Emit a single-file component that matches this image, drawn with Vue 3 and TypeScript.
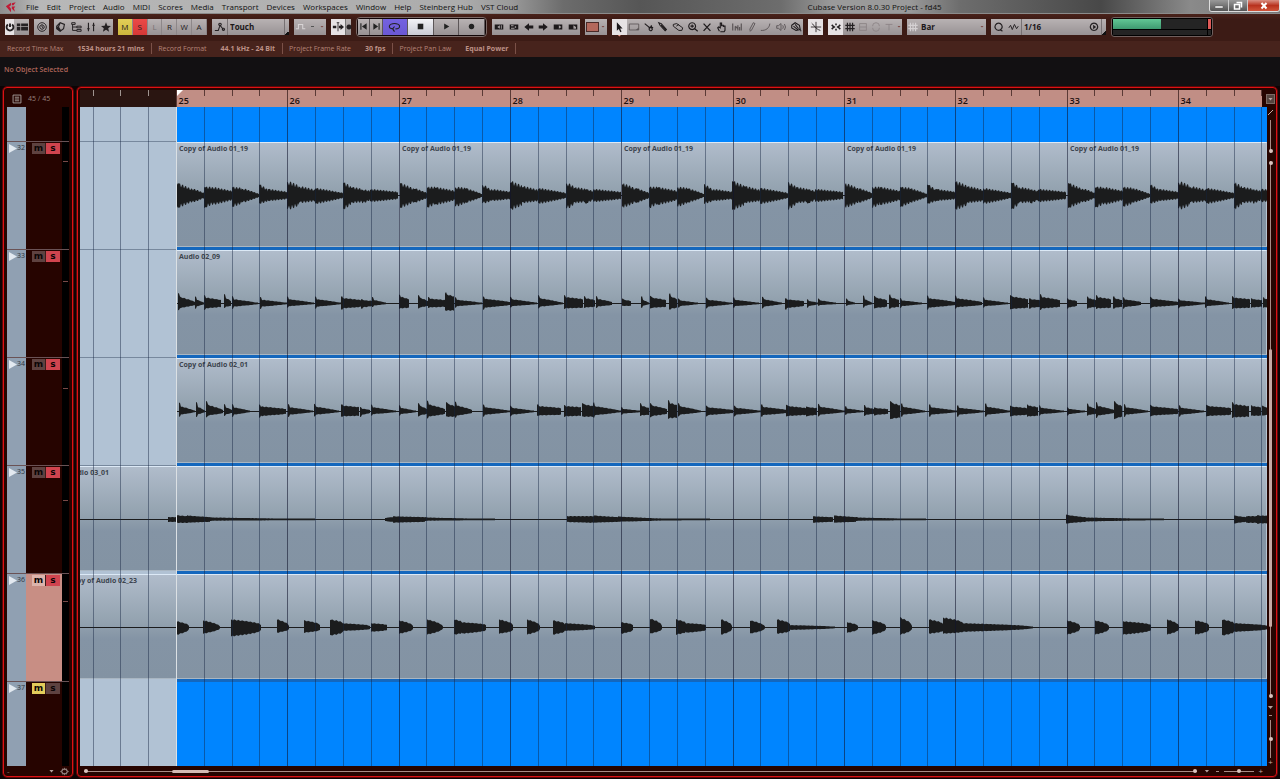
<script setup lang="ts">
import { computed, h, onBeforeUnmount, onMounted, ref } from 'vue'

type Glyph = { s?: string; f?: string; w?: number }
type Hit = [x: number, up: number, down: number, length: number, tail?: number]
type Clip = { name: string; start: number }
type Lane = { id: number; clips: Clip[]; hits: Hit[]; body: number; bend: number; comb?: boolean; mark: number }

const glyphs: Record<string, Glyph> = {
  power: { s: 'M4.6 4A4 4 0 1 0 9.4 4M7 3V7', w: 2.2 },
  layout: { f: 'M1 3h4v3H1zM6 3h8v3H6zM1 7h4v4H1zM6 7h8v4H6z' },
  clock: { s: 'M7 2a5 5 0 1 0 .01 0M7 4.4a2.6 2.6 0 1 0 .01 0M7 5v2l1.5 1', w: 1.1 },
  cube: { s: 'M2 6l4-4 5 2-1 5-4 3-4-3zM6 2L4 7l3 5', w: 1.3, f: 'M2 6l2 1 3 5-1 0-4-3z' },
  tree: { s: 'M2 2h4v2H2zM3 4v7h5M3 7h5M8 6h5v2H8zM8 10h5v2H8z', w: 1.1 },
  mixer: { s: 'M4 2v10M10 2v10M2.5 9h3M8.5 5h3M4 8v2M10 4v2', w: 1.3 },
  star: { f: 'M7 1.5l1.6 3.9 4.2.3-3.2 2.7 1 4.1L7 10.2l-3.6 2.3 1-4.1L1.2 5.7l4.2-.3z' },
  node: { s: 'M1 11h4l2-6 4 5M7 2.5a1.5 1.5 0 1 0 .01 0M11 8.5a1.3 1.3 0 1 0 .01 0', w: 1.2 },
  pulse: { s: 'M1 9h3V4h5v5h3', w: 1.2 },
  autoscroll: { s: 'M7 2v10M5.5 2h3', w: 1, f: 'M1 5.5h4v3H1zM8 5.5h2V3.6L14 7l-4 3.4V8.5H8z' },
  dot: { f: 'M7 4a3 3 0 1 0 .01 0' },
  prev: { f: 'M3 3h1.4v8H3zM11 3v8L5 7z' },
  next: { f: 'M9.6 3H11v8H9.6zM3 3v8l6-4z' },
  cycle: { s: 'M5.5 9.600C2 9.600 1 8 1.600 6.200 3 3 11 3 12.400 6.200 13 8.500 11 9.600 8 9.600M7 7l-2 2.600L7 12.500', w: 1.2 },
  stop: { f: 'M4 4h6v6H4z' },
  play: { f: 'M4.500 3.800v6.400L10 7z' },
  record: { f: 'M7 4a3 3 0 1 0 .01 0' },
  boxLeft: { f: 'M2 4h10v6H2zM8 5v4L5 7zM9.200 5h1v4h-1z' },
  boxRight: { f: 'M2 4h10v6H2zM3.500 5h3v1h-3zM3.500 8h4v1h-4zM8 5.500l2 1.500-2 1.500z' },
  left: { f: 'M1.500 7L7 2.500v2.700h5v3.600H7v2.700z' },
  right: { f: 'M12.500 7L7 2.500v2.700H2v3.600h5v2.700z' },
  headLeft: { f: 'M2 4h10v6H2zM8 5v4l3-2z' },
  headRight: { f: 'M2 4h10v6H2zM7.500 5v4h3V7z' },
  arrow: { f: 'M4.500 1.500v10l2.300-2.200 1.700 3.700 1.500-.8-1.700-3.500h2.900z' },
  range: { s: 'M1.500 3.500h11v7h-11z', f: 'M9 10.500h3.500V7.500z', w: 1 },
  scissors: { s: 'M2 3l6 5M6.500 8l4-1.500M8 8a1.700 1.700 0 1 0 2 3 1.700 1.700 0 0 0-2-3M10.500 5.500a1.200 1.200 0 1 0 1 1.500', w: 1.3 },
  glue: { s: 'M2 2l3 1 6 7-1.500 1.500L3.500 5z', w: 1.2, f: 'M5 4l6 6.500L9.500 11 4 5z' },
  eraser: { s: 'M1.500 4l4-1 7 5-1 3H8L1.500 6zM5 6l3-2', w: 1.1 },
  zoom: { s: 'M6 2a4 4 0 1 0 .01 0M4 6h4M6 4v4M9 9l3.500 3', w: 1.3 },
  mute: { s: 'M3 3l8 8.500M11 3l-8 8.500', w: 1.5 },
  hand: { s: 'M4 12L2 8l1-1 2 1V4M5 7V2.500h1.500V6M6.500 5h2v2M8.500 6h2v5l-1 1.500H5', w: 1.3 },
  warp: { s: 'M2 3v8M5 6v5M8 5v6M12 3v8M10 7v4M5 6l3 3', w: 1.4 },
  pencil: { s: 'M5 12l-.500-2.500L8.500 2l2 1-4 7.500z', w: 1.1 },
  curve: { s: 'M1 11C7 11.500 11 8 11.500 3', w: 1.1 },
  speaker: { s: 'M2 5.500h2L7 3v8L4 8.500H2zM9 5q1.500 2 0 4M11 3.500q2.500 3.500 0 7', w: 1.1 },
  bucket: { s: 'M2 5l4-3 5 3 1 5-5 1-5-3zM4 6l5 4M6 4l4 5M11 9l2 3', w: 1.2 },
  crosshair: { s: 'M7 1v12M1 7h12M2 2.500C5 5 6 9 12 11', w: 1 },
  snap: { s: 'M2 4.500L4.500 7 2 9.500M5 7h1M12 4.500L9.500 7 12 9.500M9 7H8M7 3v2M7 9v2', w: 1.8 },
  grid: { s: 'M4 2v10M7 2v10M10 2v10M1.500 5h11M1.500 9h11', w: 1.4 },
  box: { s: 'M3 3h8v8H3zM3 7h8', w: 1 },
  loop: { s: 'M3 6a4 4 0 0 1 8 0M11 8a4 4 0 0 1-8 0', w: 1 },
  tee: { s: 'M3 4h8M7 4v7', w: 1 },
  quant: { s: 'M6.500 2.500a4.200 4.200 0 1 0 .01 0M8 9.500l3 2.500', w: 1.4 },
  wave: { s: 'M1 8l2-3 2 5 2.500-6L10 9l2-3', w: 1.1 },
  apply: { s: 'M7 2.500a4.300 4.300 0 1 0 .01 0', w: 1.4, f: 'M6 4.500L9.500 7 6 9.500z' },
  logo: { f: 'M1 6l6-4 0 3-2 1.500L7 9v4zM8 2.500l4.500-1L10 5l-2 0zM8 6.500l4 0-1.500 2 1 4L8 9z' },
  list: { s: 'M1.500 1.500h11v11h-11zM4 4.500h6M4 7h6M4 9.500h6', w: 1.3 },
  gear: { s: 'M7 2.500l1 1.500 2-.5.5 2 2 1.500-2 1.500-.5 2-2-.5-1 1.500-1-1.500-2 .5-.5-2-2-1.500 2-1.500.5-2 2 .5z', w: 2 },
}

const Icon = (props: { name: string }) => {
  const g = glyphs[props.name]
  return h('svg', { viewBox: '0 0 14 14', 'aria-hidden': 'true' }, [
    g.s ? h('path', { d: g.s, fill: 'none', stroke: 'currentColor', 'stroke-width': g.w ?? 1 }) : null,
    g.f ? h('path', { d: g.f, fill: 'currentColor', 'fill-rule': 'evenodd' }) : null,
  ])
}
Icon.props = ['name']

const menus = ['File', 'Edit', 'Project', 'Audio', 'MIDI', 'Scores', 'Media', 'Transport', 'Devices', 'Workspaces', 'Window', 'Help', 'Steinberg Hub', 'VST Cloud']
const windows = ['cube', 'tree', 'mixer', 'star']
const states = ['M', 'S', 'L', 'R', 'W', 'A']
const transport = ['prev', 'next', 'cycle', 'stop', 'play', 'record']
const locators = ['boxLeft', 'boxRight', 'left', 'right', 'headLeft', 'headRight']
const tools = ['arrow', 'range', 'scissors', 'glue', 'eraser', 'zoom', 'mute', 'hand', 'warp', 'pencil', 'curve', 'speaker', 'bucket']
const info = [
  ['Record Time Max', '1534 hours 21 mins'],
  ['Record Format', '44.1 kHz - 24 Bit'],
  ['Project Frame Rate', '30 fps'],
  ['Project Pan Law', 'Equal Power'],
]
const automation = ref('Touch')
const gridType = ref('Bar')
const quantize = ref('1/16')

// Timeline geometry: project x of the left view edge, of bar 25, and the width of a beat
const viewX = 80
const barX = 177
const beat = 27.83
const viewWidth = ref(window.innerWidth - 93)
const measure = () => { viewWidth.value = window.innerWidth - 93 }
onMounted(() => window.addEventListener('resize', measure))
onBeforeUnmount(() => window.removeEventListener('resize', measure))

const lines = computed(() => {
  const count = Math.ceil((viewWidth.value - (barX - viewX)) / beat) + 3
  return Array.from({ length: count }, (_, i) => {
    const k = i - 3
    return { k, x: Math.round(barX - viewX + k * beat) - 0.5, bar: k >= 0 && k % 4 === 0 }
  })
})
const bars = computed(() =>
  lines.value.filter((l) => l.bar && l.x + 20 < viewWidth.value).map((l) => ({ x: l.x, n: 25 + l.k / 4 })),
)

const loopHits: Hit[] = [[177, 12, 12, 14, 6], [191, 7, 7, 13, 2], [204, 8, 12, 8, 8], [212, 8, 9, 20, 4], [232, 8, 11, 10, 7], [242, 7, 7, 17, 1], [259, 11, 8, 9, 5], [268, 6, 5, 20, 3], [287, 14, 14, 12, 9], [299, 9, 7, 16, 5], [315, 7, 8, 28, 2], [343, 13, 14, 8, 8], [351, 8, 7, 11, 6], [362, 6, 8, 8, 4], [370, 6, 6, 28, 3]]
const copies = [0, 1, 2, 3, 4]

const lanes: Lane[] = [
  {
    id: 32, mark: 19, comb: true, body: 1, bend: 0.9,
    clips: copies.map((i) => ({ name: 'Copy of Audio 01_19', start: Math.round(barX + i * beat * 8) })),
    hits: copies.flatMap((i) => loopHits.map(([x, u, d, l, t]): Hit => [x + Math.round(i * beat * 8), u, d, l, t])),
  },
  {
    id: 33, mark: 31, body: 0.6, bend: 0.8, clips: [{ name: 'Audio 02_09', start: barX }],
    hits: [[178, 11, 7, 17, 1], [195, 7, 5, 9], [204, 8, 6, 17, 3], [224, 9, 4, 7, 2], [232, 7, 5, 26], [260, 6, 5, 27], [287, 7, 4, 27], [315, 7, 5, 26], [341, 7, 6, 20, 3], [361, 4, 5, 12, 2], [372, 6, 3, 14], [399, 9, 5, 10, 4], [418, 9, 5, 10, 2], [428, 6, 4, 17, 3], [445, 11, 7, 9, 7], [455, 6, 4, 27], [483, 7, 6, 27, 1], [510, 7, 4, 27], [538, 9, 5, 25], [564, 8, 5, 19, 4], [584, 7, 4, 11, 3], [596, 7, 4, 16, 1], [622, 5, 2, 9, 2], [641, 7, 4, 8], [650, 8, 5, 16, 3], [669, 10, 6, 8, 4], [678, 5, 4, 20], [706, 6, 5, 26], [733, 6, 4, 26], [762, 7, 5, 20], [785, 5, 6, 19, 2], [807, 4, 4, 12], [818, 5, 2, 18], [846, 5, 2, 9], [863, 8, 4, 9], [874, 8, 5, 13, 3], [889, 9, 5, 10, 3], [900, 5, 4, 22], [927, 8, 6, 28, 1], [955, 8, 5, 27, 1], [983, 6, 4, 25], [1010, 9, 6, 18, 4], [1029, 5, 5, 11, 3], [1040, 9, 6, 20, 3], [1067, 5, 5, 10, 2], [1087, 7, 5, 9, 3], [1096, 8, 5, 15, 4], [1113, 7, 5, 9, 3], [1123, 6, 5, 18, 1], [1150, 7, 5, 28, 1], [1178, 5, 5, 27], [1205, 7, 4, 24], [1232, 7, 5, 18, 4], [1251, 5, 4, 11, 3], [1263, 6, 4, 8, 3]],
  },
  {
    id: 34, mark: 30, body: 0.6, bend: 0.8, clips: [{ name: 'Copy of Audio 02_01', start: barX }],
    hits: [[179, 9, 5, 16], [196, 9, 5, 9], [206, 11, 6, 17, 1], [224, 7, 4, 8, 1], [232, 7, 5, 18], [259, 7, 6, 27, 2], [288, 7, 5, 25], [314, 8, 5, 25], [341, 7, 5, 18, 4], [360, 4, 5, 10, 1], [371, 7, 4, 25], [399, 6, 4, 17], [418, 9, 5, 9, 2], [427, 11, 7, 18, 2], [446, 10, 5, 9, 5], [455, 10, 6, 17, 1], [483, 7, 5, 27], [510, 6, 5, 24], [537, 7, 4, 24, 3], [564, 6, 5, 17, 4], [582, 9, 5, 11, 5], [593, 9, 6, 28], [621, 4, 3, 20], [640, 8, 4, 9, 3], [650, 9, 6, 17, 2], [668, 11, 7, 9, 6], [678, 9, 5, 23], [706, 6, 5, 27, 1], [734, 6, 5, 27], [761, 7, 5, 26, 1], [786, 7, 5, 20, 3], [806, 5, 5, 11, 3], [818, 8, 5, 27], [845, 5, 3, 18], [864, 6, 4, 10, 2], [874, 4, 4, 14, 2], [890, 11, 8, 10, 6], [901, 8, 5, 24], [929, 7, 5, 28], [957, 6, 5, 27], [985, 8, 5, 25], [1010, 6, 5, 17, 3], [1027, 7, 5, 11, 4], [1039, 6, 4, 25], [1067, 4, 4, 18], [1087, 8, 4, 9, 2], [1096, 9, 6, 18, 1], [1114, 11, 8, 8, 5], [1124, 7, 5, 24], [1150, 7, 5, 28, 2], [1179, 6, 5, 25], [1206, 7, 5, 25, 3], [1232, 9, 6, 17, 5], [1251, 6, 4, 10, 4], [1262, 6, 4, 9, 3]],
  },
  {
    id: 35, mark: 34, body: 0.8, bend: 1, clips: [{ name: 'Audio 03_01', start: 66 }],
    hits: [[168, 2, 2, 9, 2], [177, 4, 3, 10, 3], [187, 4, 3, 23, 2], [210, 2, 1, 105], [385, 1, 1, 8, 2], [393, 3, 3, 32, 2], [425, 2, 1, 70], [567, 3, 2, 27, 3], [594, 4, 3, 24, 2], [618, 3, 2, 32, 1], [650, 1, 1, 60], [813, 3, 3, 20, 2], [834, 4, 3, 22, 2], [856, 2, 1, 70], [1066, 5, 4, 18, 2], [1084, 2, 2, 80], [1234, 4, 4, 12, 2], [1246, 3, 3, 11, 3], [1257, 4, 4, 20, 3]],
  },
  {
    id: 36, mark: 27, body: 1, bend: 0.5, clips: [{ name: 'Copy of Audio 02_23', start: 66 }],
    hits: [[177, 6, 7, 12, 1], [203, 7, 6, 17], [231, 8, 9, 30, 2], [277, 8, 5, 12, 1], [304, 7, 5, 16, 2], [330, 8, 8, 13, 4], [343, 4, 3, 27, 1], [371, 4, 4, 16, 2], [399, 7, 6, 14, 1], [427, 8, 7, 16], [454, 8, 7, 8, 5], [462, 5, 6, 24, 2], [499, 8, 6, 14, 2], [527, 8, 7, 13, 1], [553, 7, 7, 12, 3], [565, 4, 3, 30, 1], [621, 5, 6, 12, 2], [650, 9, 6, 12, 1], [676, 8, 7, 10, 4], [686, 4, 5, 20, 2], [721, 8, 7, 11, 1], [750, 7, 6, 15], [777, 8, 6, 13, 3], [790, 2, 2, 45], [847, 5, 5, 11, 1], [872, 7, 7, 14, 1], [900, 10, 7, 12, 1], [929, 8, 6, 14, 3], [943, 10, 6, 20, 4], [963, 4, 4, 70], [1067, 7, 7, 13, 1], [1095, 7, 7, 14, 1], [1123, 6, 7, 28, 2], [1167, 8, 7, 12, 1], [1195, 7, 7, 14, 2], [1222, 8, 8, 12, 4], [1234, 4, 4, 34, 1]],
  },
]

const mid = 53
function wavePath(lane: Lane): string {
  return lane.hits
    .map(([x, up, down, length, tail = 0]) => {
      const top: string[] = []
      const bottom: string[] = []
      for (let i = 0; i <= length; i++) {
        const fall = i < 2 ? 1 : lane.body * Math.pow(1 - i / length, lane.bend)
        const comb = lane.comb && i > 1 ? [1.08, 0.72, 1][(x + i) % 3] : 1 - ((x * 7 + i * 5) % 4) * 0.05
        const px = x - viewX + i
        top.push(`${px} ${(mid - Math.max(0.5, (tail + (up - tail) * fall) * comb)).toFixed(1)}`)
        bottom.unshift(`${px} ${(mid + 1 + Math.max(0.3, (tail + (down - tail) * fall) * comb)).toFixed(1)}`)
      }
      return `M${top.join('L')}L${bottom.join('L')}Z`
    })
    .join('')
}
const drawn = computed(() => lanes.map((l) => ({ ...l, path: wavePath(l), gutter: Math.max(0, l.clips[0].start - viewX) })))

function clipStyle(lane: Lane, i: number) {
  const clip = lane.clips[i]
  const next = lane.clips[i + 1]
  return {
    marginLeft: clip.start < viewX ? `${clip.start - viewX}px` : undefined,
    flex: next ? `0 0 ${next.start - clip.start}px` : '1 0 0',
  }
}
</script>

<template>
  <div class="app">
    <header class="titlebar">
      <Icon name="logo" class="logo" />
      <nav class="menus"><button v-for="m in menus" :key="m" type="button">{{ m }}</button></nav>
      <h1>Cubase Version 8.0.30 Project - fd45</h1>
      <div class="winctl">
        <button type="button" aria-label="Minimize"><svg viewBox="0 0 18 12"><path d="M5 6h8v2H5z" fill="#fff" stroke="#555" stroke-width=".5" /></svg></button>
        <button type="button" aria-label="Restore"><svg viewBox="0 0 18 12"><path d="M7.500 2.500h5v5M5.500 4.500h5v4.500h-5z" fill="none" stroke="#fff" stroke-width="1.500" /></svg></button>
        <button type="button" aria-label="Close" class="close"><svg viewBox="0 0 18 12"><path d="M6.500 3l5 5.500M11.500 3l-5 5.500" stroke="#fff" stroke-width="2" /></svg></button>
      </div>
    </header>

    <div class="toolbar">
      <div class="group w-setup">
        <button type="button" class="lit narrow" aria-label="Activate project"><Icon name="power" /></button>
        <button type="button" aria-label="Window layout"><Icon name="layout" /></button>
      </div>
      <div class="group w-one"><button type="button" aria-label="Delay compensation"><Icon name="clock" /></button></div>
      <div class="group w-windows"><button v-for="n in windows" :key="n" type="button" :aria-label="n"><Icon :name="n" /></button></div>
      <div class="group w-states"><button v-for="s in states" :key="s" type="button" class="letter" :class="'st-' + s">{{ s }}</button></div>
      <div class="group w-auto">
        <button type="button" class="fixed" aria-label="Automation panel"><Icon name="node" /></button>
        <select v-model="automation" class="split" aria-label="Automation mode"><option>Touch</option></select>
        <span class="corner"></span>
      </div>
      <div class="group w-pulse dim"><button type="button" aria-label="Automation curve"><Icon name="pulse" /></button><span class="dash"></span><span class="caret"></span></div>
      <div class="group w-scroll">
        <button type="button" class="lit" aria-label="Autoscroll"><Icon name="autoscroll" /></button>
        <button type="button" class="tiny" aria-label="Autoscroll options"><Icon name="dot" /></button>
      </div>
      <div class="transport"><button v-for="t in transport" :key="t" type="button" :class="'t-' + t" :aria-label="t"><Icon :name="t" /></button></div>
      <div class="group w-loc"><button v-for="l in locators" :key="l" type="button" :aria-label="l"><Icon :name="l" /></button></div>
      <div class="group w-color"><button type="button" aria-label="Colour"><span class="swatch"></span></button><span class="caret"></span></div>
      <div class="group w-tools"><button v-for="t in tools" :key="t" type="button" :class="['tool-' + t, { lit: t === 'arrow' }]" :aria-label="t"><Icon :name="t" /></button></div>
      <div class="group w-one"><button type="button" class="lit" aria-label="Snap to zero crossing"><Icon name="crosshair" /></button></div>
      <div class="group w-snap">
        <button type="button" class="lit fixed" aria-label="Snap"><Icon name="snap" /></button>
        <button type="button" aria-label="Snap type grid"><Icon name="grid" /></button>
        <button type="button" class="faint" aria-label="Events"><Icon name="box" /></button>
        <button type="button" class="faint" aria-label="Shuffle"><Icon name="loop" /></button>
        <button type="button" class="faint" aria-label="Cursor"><Icon name="tee" /></button>
        <span class="caret"></span>
      </div>
      <div class="group w-grid">
        <Icon name="grid" class="pale" />
        <select v-model="gridType" aria-label="Grid type"><option>Bar</option></select>
        <span class="caret"></span>
      </div>
      <div class="group w-quant">
        <button type="button" class="fixed" aria-label="Quantize"><Icon name="quant" /></button>
        <button type="button" class="fixed" aria-label="Iterative quantize"><Icon name="wave" /></button>
        <select v-model="quantize" class="split" aria-label="Quantize preset"><option>1/16</option></select>
        <button type="button" class="fixed" aria-label="Apply quantize"><Icon name="apply" /></button>
        <span class="corner"></span>
      </div>
      <div class="perf"><div class="load"><i></i><b></b></div><div class="disk"><b></b></div></div>
    </div>

    <dl class="status">
      <div v-for="[k, v] in info" :key="k"><dt>{{ k }}</dt><dd>{{ v }}</dd></div>
    </dl>
    <p class="infoline">No Object Selected</p>

    <main class="work">
      <section class="panel tracks">
        <div class="trackhead"><Icon name="list" /><span>45 / 45</span></div>
        <div class="tracklist">
          <div class="track stub"><div class="chip"></div><div class="body"></div><div class="meter"></div></div>
          <div v-for="l in lanes" :key="l.id" class="track" :class="{ selected: l.id === 36 }">
            <div class="chip"><i class="tri"></i>{{ l.id }}</div>
            <div class="body"><button type="button" class="m">m</button><button type="button" class="s on">s</button></div>
            <div class="meter"><i :style="{ marginTop: l.mark + 'px' }"></i></div>
          </div>
          <div class="track rest">
            <div class="chip"><i class="tri"></i>37</div>
            <div class="body"><button type="button" class="m on">m</button><button type="button" class="s">s</button></div>
            <div class="meter"></div>
          </div>
        </div>
        <div class="trackfoot"><span>-</span><i class="down"></i><Icon name="gear" /></div>
      </section>

      <section class="panel arrange">
        <div class="stage">
          <div class="ruler">
            <svg>
              <line v-for="l in lines" :key="l.k" :x1="l.x" :x2="l.x" y1="0" :y2="l.bar ? 17 : 6" :class="{ pre: l.k < 0 }" />
              <path d="M97 0h6l-6 6z" class="flag" />
              <text v-for="b in bars" :key="b.n" :x="b.x + 2" y="14">{{ b.n }}</text>
            </svg>
          </div>
          <div class="lanes">
            <div class="lane stub"><div class="gutter"></div></div>
            <div v-for="l in drawn" :key="l.id" class="lane event">
              <div v-if="l.gutter" class="gutter"></div>
              <div v-for="(c, i) in l.clips" :key="c.start" class="clip" :style="clipStyle(l, i)">{{ c.name }}</div>
              <svg class="wave"><rect :x="l.gutter" y="53" width="100%" height="1" /><path :d="l.path" /></svg>
            </div>
            <div class="lane rest"><div class="gutter"></div></div>
            <svg class="gridlines">
              <line v-for="l in lines" :key="l.k" :x1="l.x" :x2="l.x" y1="0" y2="100%" :class="{ bar: l.bar, cursor: l.k === 0 }" />
            </svg>
          </div>
        </div>
        <div class="vbar">
          <button type="button" class="vmenu" aria-label="Ruler menu"><i class="down"></i></button>
          <i class="slash"></i>
          <i class="seg end short"></i>
          <i class="gap"></i>
          <i class="seg start lead"></i>
          <i class="thumb"></i>
          <i class="seg end trail"></i>
          <i class="down"></i>
          <i class="minus"></i>
          <i class="seg center"></i>
          <span>+</span>
        </div>
        <div class="hbar">
          <i class="seg start lead"></i>
          <i class="thumb"></i>
          <i class="seg end trail"></i>
          <i class="down"></i>
          <i class="minus"></i>
          <i class="seg center"></i>
          <span>+</span>
        </div>
      </section>
    </main>
  </div>
</template>

<style>
body { margin: 0; background: #0c0405; }
</style>

<style scoped>
.app { min-height: 100vh; display: flex; flex-direction: column; background: #0c0405; font-family: "Open Sans", "Noto Sans", sans-serif; font-size: 8px; line-height: 12px; color: #111; overflow: hidden; }
.app * { box-sizing: border-box; }
button { border: 0; padding: 0; margin: 0; background: none; font: inherit; color: inherit; display: flex; align-items: center; justify-content: center; }
select { appearance: none; border: 0; border-radius: 0; background: none; font: inherit; font-weight: 700; font-size: 8px; color: #1b1719; padding: 0 2px; margin: 0; min-width: 0; flex: 1; height: 100%; }
i { display: block; flex: none; }

.titlebar { height: 14px; display: flex; align-items: center; border-bottom: 1px solid #8b8b8b; background: linear-gradient(90deg, #8e8e8e 0, #b8b8b8 3%, #acacac 36%, #999 40%, #6c6c6c 44%, #565656 50%, #6d6d6d 61%, #9a9a9a 65%, #9a9a9a 71%, #6d6d6d 75%, #484848 86%, #8a8a8a 93%, #777 100%); }
.logo { width: 12px; height: 12px; margin-left: 5px; color: #c01a35; }
.menus { display: flex; gap: 8px; margin-left: 9px; }
h1 { flex: 1; margin: 0; padding-left: 22px; text-align: center; font-size: 8px; font-weight: 400; line-height: 12px; }
.winctl { display: flex; align-self: flex-start; width: 71px; height: 12px; border: 1px solid #ddd; border-top: 0; border-radius: 0 0 3px 3px; overflow: hidden; }
.winctl button { flex: 0 0 18px; background: linear-gradient(#999, #555); border-right: 1px solid #ccc; }
.winctl svg { width: 18px; height: 12px; }
.winctl .close { flex: 1; border: 0; background: linear-gradient(#d99084, #b8321e 50%, #d0553a); }

.toolbar { height: 27px; display: flex; align-items: center; gap: 5px; padding: 0 0 2px 5px; background: linear-gradient(#4a221a, #3c1b15 20%, #3c1b15); }
.group { height: 16px; display: flex; align-items: center; flex: none; background: linear-gradient(#b8b2b3, #989294); color: #242022; }
.group > button { height: 100%; flex: 1; min-width: 0; }
.group svg { width: 12px; height: 12px; flex: none; }
.group > .fixed { flex: 0 0 15px; }
.group > .narrow { flex: 0 0 9px; }
.group > .tiny { flex: 0 0 6px; border-left: 1px solid #777; }
.group > .lit { background: #e6e2e4; }
.faint { color: #8b8385; }
.dim { color: #d8d4d5; }
.pale { color: #d4d0d2; }
.letter { border-right: 1px solid #8d8789; }
.st-M { background: linear-gradient(#e2cf58, #cdb63c); }
.st-S { background: linear-gradient(#ea4a48, #d63836); }
.st-L { color: #777173; }
.split { border-left: 1px solid #777173; }
.corner { align-self: flex-end; width: 5px; height: 100%; border-left: 1px solid #777173; background: linear-gradient(135deg, transparent 50%, #111 50%) right bottom / 4px 4px no-repeat; }
.caret { flex: none; width: 4px; height: 2px; margin: 0 2px; background: #7c4642; clip-path: polygon(0 0, 100% 0, 50% 100%); }
.dash { width: 3px; height: 1px; margin: 0 4px; background: #555; }
.w-setup { width: 24px; } .w-one { width: 15px; } .w-windows { width: 59px; } .w-states { width: 89px; }
.w-auto { width: 77px; } .w-pulse { width: 32px; } .w-scroll { width: 20px; } .w-loc { width: 88px; }
.w-color { width: 22px; } .w-tools { width: 191px; } .w-snap { width: 74px; } .w-grid { width: 79px; } .w-quant { width: 115px; }
.w-snap .caret { margin: 0 1px; }
.w-tools, .w-loc { color: #1d191b; }
.tool-warp, .tool-curve, .tool-speaker, .tool-pencil, .tool-range { color: #5b5557; }
.tool-arrow { position: relative; }
.tool-arrow::after { content: ""; position: absolute; left: 50%; top: 100%; width: 4px; height: 2px; margin-left: -2px; background: #f0a090; clip-path: polygon(0 0, 100% 0, 50% 100%); }
.swatch { width: 13px; height: 10px; background: #b3685c; border: 1px solid #4a2a28; }
.transport { width: 131px; height: 20px; flex: none; display: flex; padding: 1px; background: #120607; border: 1px solid #7d6a67; border-radius: 4px; }
.transport button { flex: 26 0 0; background: linear-gradient(#b8b2b3, #989294); border-right: 1px solid #5c5658; color: #222; }
.transport svg { width: 13px; height: 13px; }
.transport .t-prev, .transport .t-next { flex: 12 0 0; }
.transport .t-prev svg, .transport .t-next svg { width: 11px; height: 11px; }
.transport .t-cycle { background: linear-gradient(#7462e0, #6a58d4); }
.transport .t-stop { background: linear-gradient(#f2f2f6, #c9cbd4); }
.perf { width: 102px; height: 20px; flex: none; display: flex; flex-direction: column; gap: 1px; padding: 1px; background: #000; border: 1px solid #6f5f5d; border-radius: 3px; }
.load { flex: 10 0 0; display: flex; justify-content: space-between; background: #242424; }
.load i { width: 49%; background: linear-gradient(#62c795, #3e9a70); }
.load b { width: 4px; background: #e05a58; border-left: 1px solid #000; }
.disk { flex: 5 0 0; display: flex; justify-content: flex-end; background: #242424; }
.disk b { width: 4px; border-left: 1px solid #000; }

.status { height: 16px; margin: 0; display: flex; align-items: center; background: #47231c; color: #b58478; padding: 0 0 1px 7px; font-size: 7px; }
.status div { display: flex; border-right: 1px solid #7b5148; margin-right: 6px; padding-right: 7px; line-height: 11px; }
.status dd { margin: 0 0 0 14px; font-weight: 700; color: #bd9187; }
.infoline { height: 29px; margin: 0; padding: 7px 4px; background: #121012; color: #b0665a; font-size: 7px; font-weight: 600; }

.work { flex: 1; display: flex; gap: 2px; padding: 0 2px 1px 2px; }
.panel { border: 1px solid #5a0808; outline: 1px solid #dc1114; outline-offset: -2px; border-radius: 5px; background: #260400; padding: 3px 1px 1px 3px; }
.tracks { width: 72px; flex: none; display: flex; flex-direction: column; padding-left: 4px; }
.trackhead { height: 17px; display: flex; align-items: center; gap: 6px; padding-left: 5px; font-size: 7px; color: #97817c; }
.trackhead svg { width: 10px; height: 10px; color: #a8a09c; }
.tracklist { flex: 1; display: flex; flex-direction: column; }
.track { height: 108px; flex: none; display: flex; border-bottom: 1px solid #6a5255; margin-right: 3px; }
.track.stub { height: 35px; }
.track.rest { flex: 1; border: 0; }
.chip { width: 19px; flex: none; display: flex; align-items: flex-start; background: #90a0b2; font-size: 7px; color: #2c3440; padding-left: 2px; }
.tri { width: 8px; height: 9px; margin-top: 2px; background: #e3e9f0; clip-path: polygon(0 0, 100% 50%, 0 100%); }
.body { flex: 1; display: flex; align-items: flex-start; padding: 1px 0 0 6px; }
.selected .body { background: #c88e84; }
.body button { width: 14px; height: 11px; background: #5e4240; color: #0b0505; font-family: "DejaVu Sans", sans-serif; font-weight: 700; font-size: 9px; line-height: 9px; padding-bottom: 1px; border-right: 1px solid #3a1c1a; }
.body .s { border: 0; }
.body .s.on { background: #d0444e; }
.body .m.on { background: #e2cc5a; }
.selected .m { background: #dcb4ac; }
.meter { width: 7px; background: #000; }
.meter i { width: 5px; height: 1px; margin-left: 1px; background: #7a4a48; }
.trackfoot { height: 10px; display: flex; align-items: center; color: #8c7a76; padding-right: 3px; }
.trackfoot span { flex: 1; line-height: 8px; }
.trackfoot svg { width: 9px; height: 9px; margin-left: 6px; }

.arrange { flex: 1; min-width: 0; display: grid; grid-template-columns: 1fr 9px; grid-template-rows: 1fr 10px; }
.stage { min-width: 0; overflow: hidden; display: flex; flex-direction: column; }
.ruler { height: 17px; flex: none; margin-right: 5px; background: linear-gradient(90deg, #2a1511 97px, #c18e85 97px); }
.ruler svg { display: block; width: 100%; height: 17px; }
.ruler line { stroke: #5b3a36; }
.ruler .pre { stroke: #a09490; }
.ruler .flag { fill: #fff; }
.ruler text { font-size: 9px; font-weight: 600; fill: #1c0f0e; }
.lanes { position: relative; flex: 1; display: flex; flex-direction: column; background: linear-gradient(90deg, #b1c2d4 97px, #0085ff 97px); }
.lane { position: relative; height: 108px; flex: none; display: flex; overflow: hidden; }
.lane.stub { height: 35px; }
.lane.rest { flex: 1; }
.lane.event { background: linear-gradient(90deg, #b1c2d4 97px, #1467bd 97px); }
.gutter { width: 97px; flex: none; border-bottom: 1px solid #77889d; }
.rest .gutter { border: 0; }
.clip { height: 105px; padding: 0 0 0 2px; overflow: hidden; white-space: nowrap; border-top: 1px solid #dce9f6; border-bottom: 1px solid #a9b6c2; border-right: 1px solid #b6c4d2; background: linear-gradient(#b0bccb, #93a2af 46%, #8494a5 62%, #8393a3); color: #3c444e; font-weight: 700; font-size: 7px; }
.wave { position: absolute; left: 0; top: 0; width: 100%; height: 108px; fill: #1b1c1d; }
.gridlines { position: absolute; left: 0; top: 0; width: 100%; height: 100%; }
.gridlines line { stroke: rgba(20, 35, 65, .45); }
.gridlines .bar { stroke: rgba(18, 20, 45, .58); }
.gridlines .cursor { stroke: #dbe0e4; }

.down { width: 5px; height: 3px; background: #b4a29e; clip-path: polygon(0 0, 100% 0, 50% 100%); }
.vbar { display: flex; flex-direction: column; align-items: center; padding-right: 2px; color: #c4aca6; line-height: 8px; }
.vmenu { width: 9px; height: 10px; margin: 4px 0 3px; background: #54443f; border: 1px solid #7c6a64; }
.slash { width: 5px; height: 5px; margin: 3px 0 5px; background: linear-gradient(135deg, transparent 42%, #c4aca6 42%, #c4aca6 58%, transparent 58%); }
.seg { display: flex; }
.seg::before { content: ""; width: 4px; height: 4px; border-radius: 50%; background: #d9c4bf; }
.seg.end { justify-content: flex-end; }
.seg.center { justify-content: center; }
.vbar .seg { flex-direction: column; width: 4px; background: linear-gradient(#a88c86, #a88c86) center / 1px 100% no-repeat; }
.vbar .short { height: 33px; }
.vbar .gap { height: 8px; }
.vbar .lead { flex: 187 0 0; }
.vbar .thumb { flex: 276 0 0; width: 3px; border-radius: 2px; background: #c7a9a4; }
.vbar .trail { flex: 71 0 0; margin-bottom: 8px; }
.minus { width: 3px; height: 1px; background: #a88c86; }
.vbar .minus { margin: 6px 0 4px; }
.vbar .center { height: 38px; }
.hbar { display: flex; align-items: center; padding: 0 4px; color: #c4aca6; line-height: 8px; }
.hbar .seg { height: 4px; background: linear-gradient(#a88c86, #a88c86) center / 100% 1px no-repeat; }
.hbar .lead { flex: 88 0 0; }
.hbar .thumb { flex: 37 0 0; height: 3px; border-radius: 2px; background: #d3b9b3; }
.hbar .trail { flex: 989 0 0; margin-right: 7px; }
.hbar .minus { margin: 0 5px 0 7px; }
.hbar .center { width: 30px; margin-right: 4px; }
</style>
